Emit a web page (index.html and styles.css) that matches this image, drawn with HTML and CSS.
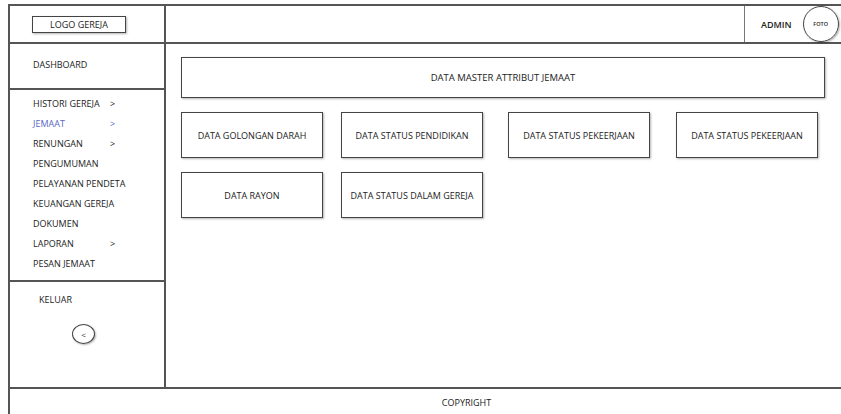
FILE: index.html
```html
<!DOCTYPE html>
<html lang="id">
<head>
  <meta charset="UTF-8">
  <title>Data Master Attribut Jemaat</title>
  <link rel="stylesheet" href="styles.css">
</head>
<body>

  <div class="page">
    <div class="brand">
      <div class="logo-box">LOGO GEREJA</div>
    </div>

    <div class="topbar">
      <div class="user">
        <span class="user-name">ADMIN</span>
        <span class="foto">FOTO</span>
      </div>
    </div>

    <aside class="sidebar">
      <div class="side-top">
        <a class="menu-item">DASHBOARD</a>
      </div>
      <div class="side-menu">
        <a class="menu-item"><span class="label">HISTORI GEREJA</span>&gt;</a>
        <a class="menu-item active"><span class="label">JEMAAT</span>&gt;</a>
        <a class="menu-item"><span class="label">RENUNGAN</span>&gt;</a>
        <a class="menu-item">PENGUMUMAN</a>
        <a class="menu-item">PELAYANAN PENDETA</a>
        <a class="menu-item">KEUANGAN GEREJA</a>
        <a class="menu-item">DOKUMEN</a>
        <a class="menu-item"><span class="label">LAPORAN</span>&gt;</a>
        <a class="menu-item">PESAN JEMAAT</a>
      </div>
      <div class="side-bottom">
        <a class="menu-item logout">KELUAR</a>
        <button class="collapse-btn">&lt;</button>
      </div>
    </aside>

    <main class="content">
      <div class="title-box">DATA MASTER ATTRIBUT JEMAAT</div>
      <div class="cards">
        <div class="card">DATA GOLONGAN DARAH</div>
        <div class="card">DATA STATUS PENDIDIKAN</div>
        <div class="card">DATA STATUS PEKEERJAAN</div>
        <div class="card">DATA STATUS PEKEERJAAN</div>
        <div class="card">DATA RAYON</div>
        <div class="card">DATA STATUS DALAM GEREJA</div>
      </div>
    </main>

    <footer class="footer">COPYRIGHT</footer>
  </div>

</body>
</html>
```

FILE: styles.css
```css
body {
  margin: 0;
  font-family: 'Open Sans', 'DejaVu Sans', sans-serif;
  font-size: 9px;
  color: #222;
  background: #fff;
}

.page {
  margin: 4px 0 0 8px;
  height: 410px;
  display: grid;
  grid-template-columns: 156px 1fr;
  grid-template-rows: 38px 343px 1fr;
  border-top: 2px solid #555;
  border-left: 2px solid #555;
}

.brand {
  border-right: 2px solid #555;
  border-bottom: 2px solid #555;
  display: flex;
  align-items: center;
  padding-left: 22px;
}

.logo-box {
  width: 92px;
  height: 15px;
  border: 1px solid #444;
  box-shadow: 1px 1px 2px rgba(0, 0, 0, 0.3);
  display: flex;
  align-items: center;
  justify-content: center;
  font-size: 9px;
}

.topbar {
  border-bottom: 2px solid #555;
  display: flex;
  justify-content: flex-end;
}

.user {
  width: 97px;
  border-left: 1px solid #777;
  display: flex;
  align-items: center;
  padding-left: 16px;
  box-sizing: border-box;
  gap: 11px;
}

.user-name {
  font-weight: 600;
  font-size: 9px;
}

.foto {
  width: 34px;
  height: 34px;
  border: 1px solid #444;
  border-radius: 50%;
  box-shadow: 1px 1px 2px rgba(0, 0, 0, 0.3);
  display: flex;
  align-items: center;
  justify-content: center;
  font-size: 5.5px;
  font-weight: 600;
}

.sidebar {
  border-right: 2px solid #555;
  display: flex;
  flex-direction: column;
}

.menu-item {
  display: flex;
  line-height: 20px;
  padding-left: 23px;
}

.menu-item .label {
  width: 77px;
}

.menu-item.active {
  color: #5a67c4;
}

.side-top {
  height: 46px;
  padding-top: 11px;
  box-sizing: border-box;
  border-bottom: 2px solid #555;
}

.side-menu {
  height: 192px;
  padding-top: 4px;
  box-sizing: border-box;
  border-bottom: 2px solid #555;
}

.side-bottom {
  flex: 1;
  padding-top: 8px;
}

.menu-item.logout {
  padding-left: 29px;
}

.collapse-btn {
  display: block;
  margin: 14px 0 0 62px;
  width: 23px;
  height: 20px;
  padding: 0;
  border: 1px solid #444;
  border-radius: 50%;
  background: #fff;
  box-shadow: 1px 1px 2px rgba(0, 0, 0, 0.3);
  font-size: 8px;
  color: #333;
  font-family: inherit;
}

.content {
  padding: 13px 0 0 15px;
}

.title-box {
  width: 644px;
  height: 41px;
  border: 1px solid #444;
  box-sizing: border-box;
  box-shadow: 1px 1px 2px rgba(0, 0, 0, 0.3);
  display: flex;
  align-items: center;
  justify-content: center;
  font-size: 9.5px;
}

.cards {
  margin-top: 14px;
  display: grid;
  grid-template-columns: 160px 167px 168px 142px;
  grid-auto-rows: 46px;
  row-gap: 14px;
}

.card {
  width: 142px;
  border: 1px solid #444;
  box-sizing: border-box;
  box-shadow: 1px 1px 2px rgba(0, 0, 0, 0.3);
  display: flex;
  align-items: center;
  justify-content: center;
  font-size: 9px;
}

.footer {
  grid-column: 1 / -1;
  border-top: 2px solid #555;
  display: flex;
  align-items: center;
  justify-content: center;
  padding-left: 82px;
  font-size: 9px;
}
```
